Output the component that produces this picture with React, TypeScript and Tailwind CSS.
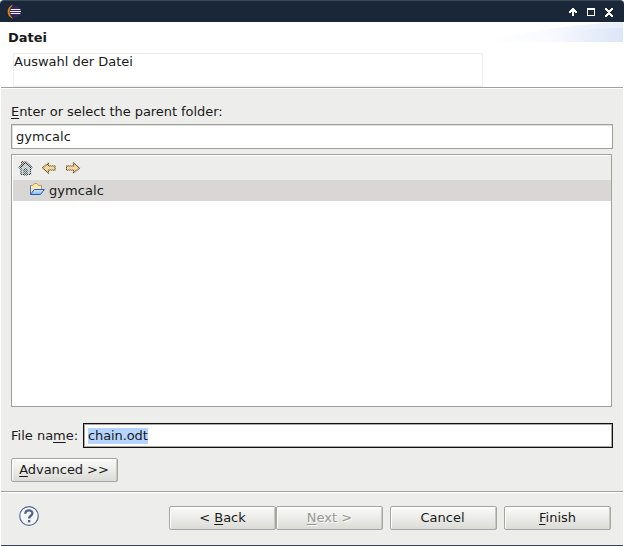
import type { ReactNode } from "react";

function TitleBar() {
  return (
    <div className="flex h-[22px] shrink-0 items-center justify-between rounded-t-[4px] border-t border-[#3d4956] bg-[#1a2738] pl-[7px] pr-[8px]">
      <svg width="16" height="16" viewBox="0 0 16 16">
        <circle cx="8.4" cy="7.7" r="5.9" fill="#33255f" />
        <path d="M5.4 1.3A6.9 6.9 0 0 0 5.4 14.1A8 8 0 0 1 5.4 1.3Z" fill="#f7941e" stroke="#e5830f" strokeWidth="0.7" />
        <path d="M3.6 5.5H13.4M3 7.5H14M3.6 9.5H13.4" stroke="#f4f2fa" strokeWidth="1" />
      </svg>
      <svg width="48" height="12" viewBox="0 0 48 12" shapeRendering="crispEdges">
        <path d="M4 2h2v1h1v1h1v1h1v2h-2v-1h-1v4h-2v-4h-1v1h-2v-2h1v-1h1v-1h1z" fill="#fff" />
        <path d="M19 2h8v8h-8zM20 4v5h6v-5z" fill="#fff" fillRule="evenodd" />
        <path d="M37 2h2v1h1v1h2v-1h1v-1h2v2h-1v1h-1v1h-1v1h1v1h1v1h1v2h-2v-1h-1v-1h-2v1h-1v1h-2v-2h1v-1h1v-1h1v-1h-1v-1h-1v-1h-1z" fill="#fff" />
      </svg>
    </div>
  );
}

function HeaderSwoosh() {
  return (
    <svg className="absolute right-0 top-0" width="140" height="20" viewBox="0 0 140 20">
      <defs>
        <linearGradient id="wave" x1="0" x2="1">
          <stop offset="0" stopColor="#fff" />
          <stop offset="0.4" stopColor="#f7f9fe" />
          <stop offset="0.7" stopColor="#e7edfa" />
          <stop offset="1" stopColor="#dae3f7" />
        </linearGradient>
      </defs>
      <path d="M0 20C40 10 90 2 140 0V20Z" fill="url(#wave)" opacity="0.65" />
      <path d="M30 20C65 11 100 6 140 6V20Z" fill="url(#wave)" opacity="0.8" />
    </svg>
  );
}

function Toolbar() {
  return (
    <div className="h-[24px] bg-[#ededeb] pl-[5px] pt-[3px]">
      <svg width="66" height="17" viewBox="0 0 66 17">
        <defs>
          <pattern id="dither" width="2" height="2" patternUnits="userSpaceOnUse">
            <rect width="2" height="2" fill="#222" />
            <rect width="1" height="1" fill="#fff" />
            <rect x="1" y="1" width="1" height="1" fill="#fff" />
          </pattern>
          <mask id="disabled" maskUnits="userSpaceOnUse" x="0" y="0" width="66" height="17">
            <rect width="66" height="17" fill="url(#dither)" />
          </mask>
        </defs>
        <path d="M3 8L8 3.5L12 8V16H3Z" fill="#e2e6e4" />
        <path d="M24.5 9L30.5 4V7H37V11H30.5V14Z" fill="#f0e3c6" stroke="#c9ae80" />
        <path d="M61.5 9L55.5 4V7H48.5V11H55.5V14Z" fill="#f0e3c6" stroke="#c9ae80" />
        <g mask="url(#disabled)">
          <path d="M3 8L8 3.5L12.5 8V15.5H3Z" fill="#b7c6c8" stroke="#20304d" strokeWidth="1.2" />
          <path d="M3.5 7V2.5H6V5" fill="#b99a68" stroke="#4e3e29" />
          <path d="M1 9L7.5 3L14 9" fill="none" stroke="#2f3a36" strokeWidth="1.8" />
          <path d="M6 10h3v6H6z" fill="#68866c" stroke="#253c34" />
          <path d="M24.5 9L30.5 4V7H37V11H30.5V14Z" fill="#ecd3a0" stroke="#75521a" strokeWidth="1.2" />
          <path d="M61.5 9L55.5 4V7H48.5V11H55.5V14Z" fill="#ecd3a0" stroke="#75521a" strokeWidth="1.2" />
        </g>
      </svg>
    </div>
  );
}

function FolderIcon() {
  return (
    <svg className="-mt-[4px]" width="16" height="16" viewBox="0 0 16 16">
      <defs>
        <linearGradient id="flap" x1="0" y1="0" x2="0" y2="1">
          <stop offset="0" stopColor="#d6effc" />
          <stop offset="1" stopColor="#79b8ee" />
        </linearGradient>
      </defs>
      <path d="M1.5 13V4.5H4L5.5 2.5H8L9.5 4.5H12.5V8" fill="#fde9a9" stroke="#bd9860" />
      <path d="M1.5 4.5V13" stroke="#4671bd" />
      <path d="M1.5 13.5L5.2 8.5H15.3L11.5 13.5Z" fill="url(#flap)" stroke="#2c58bd" />
    </svg>
  );
}

function Button({ children, disabled = false, className = "" }: { children: ReactNode; disabled?: boolean; className?: string }) {
  return (
    <button
      disabled={disabled}
      className={`flex h-[24px] w-[107px] items-center justify-center rounded-[2px] border border-[#a5a69e] bg-linear-to-b from-[#fbfbfa] to-[#dbdcd7] pb-px shadow-[inset_1px_1px_0_#fff,inset_-1px_0_0_#c7c8c1] ${
        disabled ? "text-[#979792] [text-shadow:1px_1px_0_#fff]" : "text-[#1a1a1a]"
      } ${className}`}
    >
      {children}
    </button>
  );
}

function Key({ children }: { children: ReactNode }) {
  return <span className="underline decoration-1 underline-offset-[2px] [text-decoration-skip-ink:none]">{children}</span>;
}

export default function App() {
  return (
    <div className="h-[546px] w-[624px] overflow-hidden bg-white px-px text-[13px] leading-[16px] text-[#1a1a1a] [font-family:'DejaVu_Sans',sans-serif]">
      <div className="flex h-[546px] flex-col border-b border-[#3c4354] bg-[#ededeb]">
        <div className="-mx-px bg-white">
          <TitleBar />
        </div>
        <header className="relative h-[66px] shrink-0 border-b border-[#a0a09d] bg-white">
          <HeaderSwoosh />
          <h1 className="pl-[7px] pt-[8px] font-bold">Datei</h1>
          <div className="ml-[12px] mt-[7px] h-[34px] w-[470px] border border-[#ececec]">Auswahl der Datei</div>
        </header>
        <div className="h-px shrink-0 bg-white" />

        <main className="flex h-[402px] shrink-0 flex-col pl-[10px] pr-[10px] pt-[15px]">
          <label className="h-[20px] tracking-[-0.05px]">
            <Key>E</Key>nter or select the parent folder:
          </label>
          <div className="flex h-[25px] items-center border border-[#a0a19b] bg-white pl-[4px] tracking-[0.08px] shadow-[inset_1px_1px_0_#dededb]">
            gymcalc
          </div>
          <div className="mt-[5px] h-[253px] w-[601px] border border-[#a0a19b] bg-white pl-px pt-px">
            <Toolbar />
            <div className="flex h-[21px] items-center bg-[#d8d7d5] pl-[16px]">
              <FolderIcon />
              <span className="ml-[4px] tracking-[0.08px]">gymcalc</span>
            </div>
          </div>
          <div className="mt-[16px] flex h-[25px] items-center">
            <label className="w-[72px] whitespace-nowrap">
              File na<Key>m</Key>e:
            </label>
            <div className="flex h-[25px] flex-1 items-center border border-[#101010] bg-white pl-[4px] shadow-[inset_0_0_0_1px_#aaa7a4]">
              <span className="bg-[#b5d5ff] tracking-[-0.1px]">chain.odt</span>
            </div>
          </div>
          <Button className="mt-[10px]">
            <span className="-ml-px tracking-[-0.05px]">
              <Key>A</Key>dvanced &gt;&gt;
            </span>
          </Button>
        </main>

        <footer className="flex flex-1 items-start border-t border-[#a0a19b] pl-[17px] pt-[14px] shadow-[inset_0_1px_0_#fff]">
          <svg width="22" height="22" viewBox="0 0 22 22">
            <circle cx="11" cy="10" r="9.3" fill="#f6f7f9" stroke="#576a90" strokeWidth="1.2" />
            <path d="M7.3 7.7C7.4 3.5 14.4 3.4 14.4 7.3C14.4 9.7 11.1 9.8 11.1 12.5" fill="none" stroke="#4f648d" strokeWidth="2.3" />
            <rect x="9.9" y="14" width="2.4" height="2.4" fill="#4f648d" />
          </svg>
          <div className="ml-[129px] flex">
            <Button>
              <span>
                &lt; <Key>B</Key>ack
              </span>
            </Button>
            <Button disabled>
              <span>
                <Key>N</Key>ext &gt;
              </span>
            </Button>
            <Button className="ml-[7px]">
              <span className="-ml-[2px]">Cancel</span>
            </Button>
            <Button className="ml-[7px]">
              <span>
                <Key>F</Key>inish
              </span>
            </Button>
          </div>
        </footer>
      </div>
    </div>
  );
}
